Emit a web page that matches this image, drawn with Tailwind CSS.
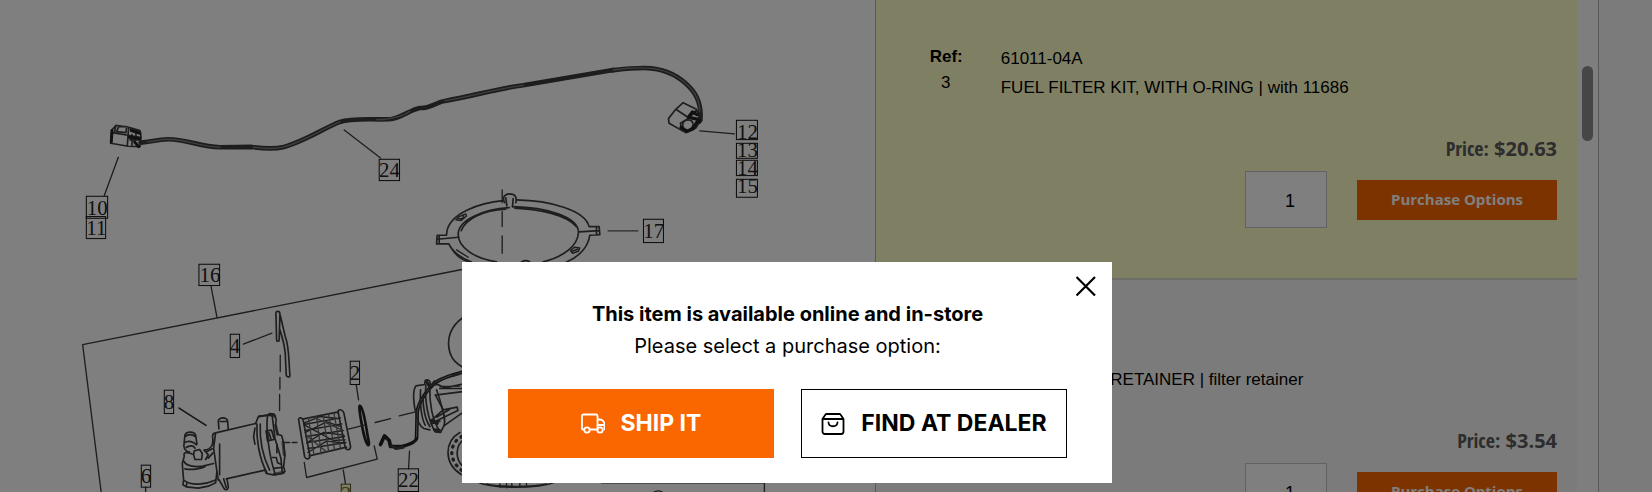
<!DOCTYPE html>
<html lang="en">
<head>
    <meta charset="UTF-8">
    <meta name="viewport" content="width=device-width, initial-scale=1.0">
    <title>Parts Diagram</title>
    <script src="https://cdn.jsdelivr.net/npm/@tailwindcss/browser@4"></script>
</head>
<body class="h-screen overflow-hidden bg-[#f6f6f6] font-['Liberation_Sans',Arial,sans-serif] text-[17px] text-black">
    <main class="flex h-full items-start">
        <!-- Diagram -->
        <section class="h-full w-[52.95%] shrink-0 overflow-hidden bg-white">
            <svg class="block h-auto w-full" viewBox="0 0 2625 1476" fill="none" stroke="#3c3c3c" stroke-width="4" stroke-linecap="round" stroke-linejoin="round" role="img" aria-label="Fuel pump parts diagram">
                <!-- wire harness -->
                <g transform="translate(180 120)">
                    <path stroke-width="14" stroke="#3a3a3a" d="M242 308C275 306 290 298 325 298C380 298 420 320 480 322L575 321C610 326 640 329 672 321C730 306 790 266 840 246C880 232 950 241 995 237C1030 230 1050 210 1080 204C1110 206 1130 186 1155 183C1240 168 1320 144 1390 136L1660 90"/>
                    <path stroke-width="4" stroke="#7c7c7c" d="M262 306C290 303 300 298 325 298C380 298 420 320 480 322M580 322C610 326 640 329 672 321C730 306 790 266 840 246M950 239C980 241 1030 230 1050 214M1155 183C1240 168 1320 144 1390 136"/>
                    <path stroke-width="14" stroke="#3a3a3a" d="M1656 91C1700 86 1740 82 1775 85C1820 90 1860 110 1890 142C1915 168 1925 200 1922 240"/>
                    <path stroke-width="4" stroke="#7c7c7c" d="M1660 90C1700 84 1740 82 1775 85C1820 90 1860 110 1890 142C1912 166 1921 190 1920 215"/>
                    <path stroke-width="5" d="M168 256L206 262L240 272L243 290L240 320L205 319L152 310L156 270ZM156 278L204 286L240 292M206 262L202 318M168 256L163 280M176 260H200L198 278L170 275ZM212 268L238 276M210 300H238M216 284V316M228 280V296"/>
                    <path stroke-width="9" stroke="#222" d="M156 272L154 306M214 272L240 280M208 292L240 296M224 306L236 320"/>
                    <path d="M175 352L133 467M853 270L962 354"/>
                </g>
                <g transform="translate(1200 120)">
                    <path stroke-width="5" d="M850 188L890 208L903 240L888 264L858 278L808 250L806 236L828 208ZM828 208L868 234L890 210M868 234L842 250L846 272M850 262C845 245 860 235 875 242C885 252 878 268 862 274"/>
                    <path stroke-width="10" stroke="#222" d="M866 232L878 216L892 224M874 234L896 238L900 246M844 262L862 274L880 266M882 262L892 246"/>
                    <path d="M900 273L1004 282"/>
                    <path stroke="#555" d="M625 573H714"/>
                </g>

                <!-- lock ring -->
                <g transform="translate(1200 120)">
                    <path d="M307 450V488M307 515V560M307 588V640"/>
                    <path stroke-width="5" d="M310 482C240 488 150 520 141 575L140 586L112 586L110 612L147 612C160 640 185 655 215 666M350 480C450 482 555 510 568 560L598 560L600 584L570 586C565 620 540 650 500 666M112 598L176 592M538 576L598 572M118 588V610M590 562V584"/>
                    <path stroke-width="5" d="M328 503C250 508 175 540 175 583C175 620 220 655 290 666M338 500C440 502 535 530 536 577C534 620 490 650 430 666M184 572C200 535 250 512 318 508M345 505C420 508 500 525 530 560"/>
                    <path stroke-width="5" d="M314 488C306 470 316 462 330 462C346 462 352 472 348 488M318 474L321 498M340 476L338 500M365 666Q378 658 390 666"/>
                    <path d="M168 540L178 530L198 522L200 528L184 542ZM172 536H192M182 542L192 528M512 632L524 622L540 624L536 634L518 640ZM516 634L534 628"/>
                </g>

                <!-- assembly outline -->
                <g transform="translate(180 750)">
                    <path d="M1210 58L68 284L124 730M453 108L471 202M550 283L636 250"/>
                    <path d="M661 316V365M660 383V418M659 434V482" />
                    <path d="M358 476L438 526M889 404L896 450M1049 604L1046 657M257 712V730"/>
                    <path d="M1178 0Q1192 24 1225 36M1190 0L1225 22"/>
                    <path stroke-width="5" d="M648 190C648 182 660 182 660 192L658 268C658 276 650 276 650 268ZM661 196L676 260C688 290 686 330 690 376C690 383 680 383 679 376L676 310C674 290 670 270 660 240"/>
                </g>

                <!-- pump housing -->
                <g transform="translate(525 1215)" stroke-width="5">
                    <path d="M12 9L93 62" stroke-width="4"/>
                    <path d="M122 84L242 56M154 222L270 196M122 84C112 84 112 94 114 106L112 120C108 128 98 136 88 136M122 84L116 130L126 200L130 226M134 118V210"/>
                    <path d="M242 56L250 36L280 30L284 26L298 28L304 44L302 60L308 88L320 92L326 112L330 152L326 186L330 200L324 206L296 210L274 206L270 196M246 58C244 100 252 160 276 204M256 58C254 100 262 150 284 196M278 32C272 70 282 150 300 206M292 34L300 100L318 160L322 204"/>
                    <path d="M274 78L290 76L298 104L278 108ZM282 84L288 102M292 158H304L308 174L318 178M306 118V144M252 34L296 30M240 70L236 96L240 118M298 190L324 188"/>
                    <path d="M132 72L130 48C134 36 154 36 158 48L160 74M136 50H154M132 224L148 252C154 258 162 252 160 244L156 222M146 222L154 248"/>
                    <path d="M28 110L30 90C36 78 58 80 62 90L66 118M30 96C40 88 52 88 62 96M28 110C24 130 30 140 44 142M28 114C40 106 56 110 64 120M34 128C44 120 56 122 60 130"/>
                    <path d="M58 138L74 134L82 146L80 164L60 164L56 150ZM28 154C24 140 36 142 54 148M28 154L22 176L26 226L24 240L34 246L70 250L100 244L122 234L126 200M28 170C30 182 60 188 84 184L116 176M30 192C50 196 76 192 90 186M26 226C50 244 90 240 120 226M34 246L36 232M88 136L100 150L92 164M96 140L112 132M100 160L114 144"/>
                    <path stroke-width="9" stroke-opacity=".7" d="M284 30L300 34M302 62L308 88M324 112L328 150M298 208L326 202M276 80L280 106"/>
                    <path stroke-dasharray="14 8" d="M330 113H368"/>
                </g>

                <!-- filter, o-ring and bracket -->
                <g transform="translate(180 750)">
                    <path stroke-width="5" d="M716 508C718 500 728 504 730 512L750 618C750 630 738 630 734 620ZM834 484C838 476 850 480 852 490L872 590C872 602 860 602 856 594ZM728 508L836 486M748 618L860 592"/>
                    <path d="M732 524L842 504M736 542L846 522M738 560L850 542M742 578L854 560M744 596L858 578M732 520L780 500L834 506M736 548L800 516L844 530M740 580L790 548L852 556M744 608L800 574L856 580M734 526L820 572L856 570"/>
                    <path stroke="#666" d="M770 500L784 612M806 494L824 600M746 506L762 614M790 498L806 604M822 490L842 596M760 502L846 540M738 556L800 606"/>
                    <path stroke-width="8" stroke="#222" d="M899 468C906 466 914 500 922 550C926 575 930 584 925 586C919 584 910 550 904 515C900 490 897 475 899 468Z"/>
                    <path d="M866 538L913 526M946 518L992 506M1018 498L1070 485M733 638L740 683L952 628L943 588M850 660L857 703"/>
                </g>

                <!-- sender, tube and connector -->
                <g transform="translate(1200 900)" stroke-width="5">
                    <path stroke-width="11" stroke="#222" d="M-58 434L-46 408L-32 422L-28 440L6 440C30 434 48 426 50 416L52 336C56 310 78 270 110 246C140 228 170 222 200 214"/>
                    <path stroke-width="3" stroke="#8a8a8a" d="M50 410L52 336C56 310 78 270 110 246C140 228 170 222 200 214"/>
                    <path stroke-width="9" d="M-24 438L-12 446L10 442M160 226L176 222M104 246L96 258"/>
                    <path d="M46 332C40 300 40 270 48 258L74 254L76 242C84 236 94 244 92 256L114 254M48 336C50 360 60 380 72 386L90 390M78 256C74 300 84 360 106 396L122 398L132 378C140 360 128 330 120 300L110 270M90 262C88 310 98 360 116 388M70 290C68 320 76 360 90 380M62 270C60 300 62 350 76 376"/>
                    <path d="M114 254L134 264L200 250M120 266H200M106 286L200 274M108 288L130 330L172 322L174 332L104 366M130 330L100 356L94 372L120 364M132 378L200 330M150 328L110 352M120 260L180 258"/>
                    <path stroke-width="10" d="M96 362L112 370M104 390L118 392M80 246L90 260"/>
                    <path d="M200 46C166 66 146 96 146 132C148 170 162 190 200 208"/>
                    <path stroke-width="10" stroke-dasharray="3 17" d="M186 410C150 428 142 478 186 512"/>
                    <path d="M180 398C134 424 130 490 184 524M196 416C166 434 164 478 190 500"/>
                </g>

                <!-- lower edge of the canister -->
                <g transform="translate(1320 1428)">
                    <path d="M110 18C160 40 290 40 350 18M140 24C180 34 280 34 320 24M180 24V34M200 22V36M216 20V34H240V20M260 22V34" />
                    <path d="M485 21H974V56M640 50Q656 40 670 50"/>
                </g>

                <!-- callouts -->
                <g fill="none" stroke="#111" stroke-width="3" stroke-linejoin="miter">
                    <rect x="259" y="589" width="64" height="66"/>
                    <rect x="259" y="650" width="58" height="66"/>
                    <rect x="1138" y="478" width="61" height="64"/>
                    <rect x="597" y="793" width="62" height="64"/>
                    <rect x="2210" y="361" width="63" height="58"/>
                    <rect x="2210" y="430" width="63" height="45"/>
                    <rect x="2210" y="481" width="63" height="46"/>
                    <rect x="2210" y="538" width="63" height="54"/>
                    <rect x="1931" y="658" width="60" height="70"/>
                    <rect x="691" y="1003" width="28" height="70"/>
                    <rect x="493" y="1171" width="28" height="70"/>
                    <rect x="1051" y="1084" width="28" height="70"/>
                    <rect x="424" y="1396" width="28" height="66"/>
                    <rect x="1024" y="1453" width="28" height="66" fill="#ffffc4" stroke="#55552a"/>
                    <rect x="1195" y="1407" width="61" height="68"/>
                </g>
                <g class="font-['Liberation_Serif',serif] text-[63px]" fill="#222" stroke="none" text-anchor="middle">
                    <text x="292" y="646">10</text>
                    <text x="289" y="706">11</text>
                    <text x="1169" y="531">24</text>
                    <text x="630" y="846">16</text>
                    <text x="2243" y="417">12</text>
                    <text x="2243" y="472">13</text>
                    <text x="2243" y="526">14</text>
                    <text x="2243" y="580">15</text>
                    <text x="1962" y="714">17</text>
                    <text x="705" y="1059">4</text>
                    <text x="507" y="1226">8</text>
                    <text x="1065" y="1140">2</text>
                    <text x="438" y="1451">6</text>
                    <text x="1038" y="1504" fill="#77773c">3</text>
                    <text x="1226" y="1463">22</text>
                </g>
            </svg>
        </section>

        <!-- Parts list -->
        <section class="mr-[53px] flex h-full flex-1 overflow-hidden border-x border-[#b0b0b0] bg-white">
            <div class="-mt-3 flex-1">
                <article class="border-b-2 border-[#dcdcd4] bg-[#ffffc8] px-5 pt-14 pb-[50px]">
                    <div class="flex leading-[29px]">
                        <div class="w-[105px] pl-[34px] leading-[26px]">
                            <p class="w-8 text-center font-bold">Ref:</p>
                            <p class="w-8 text-center">3</p>
                        </div>
                        <div>
                            <p>61011-04A</p>
                            <p>FUEL FILTER KIT, WITH O-RING | with 11686</p>
                        </div>
                    </div>
                    <p class="mt-8 text-right font-['Open_Sans',sans-serif] text-[20px] leading-[29px] font-bold text-[#5a5a5a]"><span class="font-['Open_Sans_Condensed','Open_Sans',sans-serif]">Price:</span> $20.63</p>
                    <div class="mt-2 flex items-center justify-end gap-[30px]">
                        <input type="text" value="1" aria-label="Quantity" class="h-[57px] w-[82px] border border-[#c4c4c4] bg-white pt-1 pl-2 text-center text-[18px]">
                        <button type="button" class="h-10 w-[200px] bg-[#fa6600] font-['Open_Sans',sans-serif] text-[15px] font-bold text-white">Purchase Options</button>
                    </div>
                </article>
                <article class="border-b-2 border-[#dcdcd4] bg-[#f6f6f6] px-5 pt-14 pb-[50px]">
                    <div class="flex leading-[29px]">
                        <div class="w-[105px] pl-[34px] leading-[26px]">
                            <p class="w-8 text-center font-bold">Ref:</p>
                            <p class="w-8 text-center">4</p>
                        </div>
                        <div>
                            <p>&nbsp;</p>
                            <p>FUEL FILTER RETAINER | filter retainer</p>
                        </div>
                    </div>
                    <p class="mt-8 text-right font-['Open_Sans',sans-serif] text-[20px] leading-[29px] font-bold text-[#5a5a5a]"><span class="font-['Open_Sans_Condensed','Open_Sans',sans-serif]">Price:</span> $3.54</p>
                    <div class="mt-2 flex items-center justify-end gap-[30px]">
                        <input type="text" value="1" aria-label="Quantity" class="h-[57px] w-[82px] border border-[#c4c4c4] bg-white pt-1 pl-2 text-center text-[18px]">
                        <button type="button" class="h-10 w-[200px] bg-[#fa6600] font-['Open_Sans',sans-serif] text-[15px] font-bold text-white">Purchase Options</button>
                    </div>
                </article>
            </div>
            <div class="w-[21px] bg-[#fdfdfd] pt-[66px] pl-[5px]">
                <div class="h-[75px] w-[11px] rounded-full bg-[#8c8c8c]"></div>
            </div>
        </section>
    </main>

    <!-- Purchase dialog -->
    <div class="fixed inset-0 flex items-start justify-center bg-black/50 pt-[262px] pr-[78px]">
        <div role="dialog" aria-modal="true" aria-labelledby="dialog-title" class="relative w-[650px] bg-white pt-9 pr-[45px] pb-[25px] pl-[46px] text-center font-['Inter',sans-serif]">
            <button type="button" aria-label="Close" class="absolute top-3.5 right-4">
                <svg class="size-5" viewBox="0 0 20 20" fill="none" stroke="#000" stroke-width="2.2"><path d="M0.500 1L19 19.500M19 1L0.500 19.500"/></svg>
            </button>
            <h2 id="dialog-title" class="text-[20px] leading-8 font-bold">This item is available online and in-store</h2>
            <p class="text-[20px] leading-8">Please select a purchase option:</p>
            <div class="mt-[27px] grid grid-cols-2 gap-[27px] text-[23px] font-bold">
                <button type="button" class="flex h-[69px] items-center justify-center gap-4 bg-[#fa6600] text-white">
                    <svg class="size-6" viewBox="0 0 24 24" fill="none" stroke="currentColor" stroke-width="1.800" stroke-linejoin="round"><path d="M3 17.500H2C1.400 17.500 1 17.100 1 16.500V4C1 3 1.500 2.500 2.500 2.500H15C16 2.500 16.500 3 16.500 4V17.500H9M16.500 7.500H19C21.500 7.500 23.500 10 23.500 12.500V16.500C23.500 17.100 23 17.500 22.500 17.500M16.500 13H23"/><circle cx="6" cy="18" r="2.700"/><circle cx="19" cy="18" r="2.700"/></svg>
                    SHIP IT
                </button>
                <button type="button" class="flex h-[69px] items-center justify-center gap-4 border border-black">
                    <svg class="size-6" viewBox="0 0 24 24" fill="none" stroke="currentColor" stroke-width="1.800" stroke-linecap="round" stroke-linejoin="round"><path d="M1.500 7L4.500 2.500C4.800 2 5.200 2 5.700 2H18.300C18.800 2 19.200 2 19.500 2.500L22.500 7V19.500C22.500 21 21.500 22 20 22H4C2.500 22 1.500 21 1.500 19.500ZM1.500 7H22.500M7.500 10.500C8 15.500 16 15.500 16.500 10.500"/></svg>
                    FIND AT DEALER
                </button>
            </div>
        </div>
    </div>
</body>
</html>
